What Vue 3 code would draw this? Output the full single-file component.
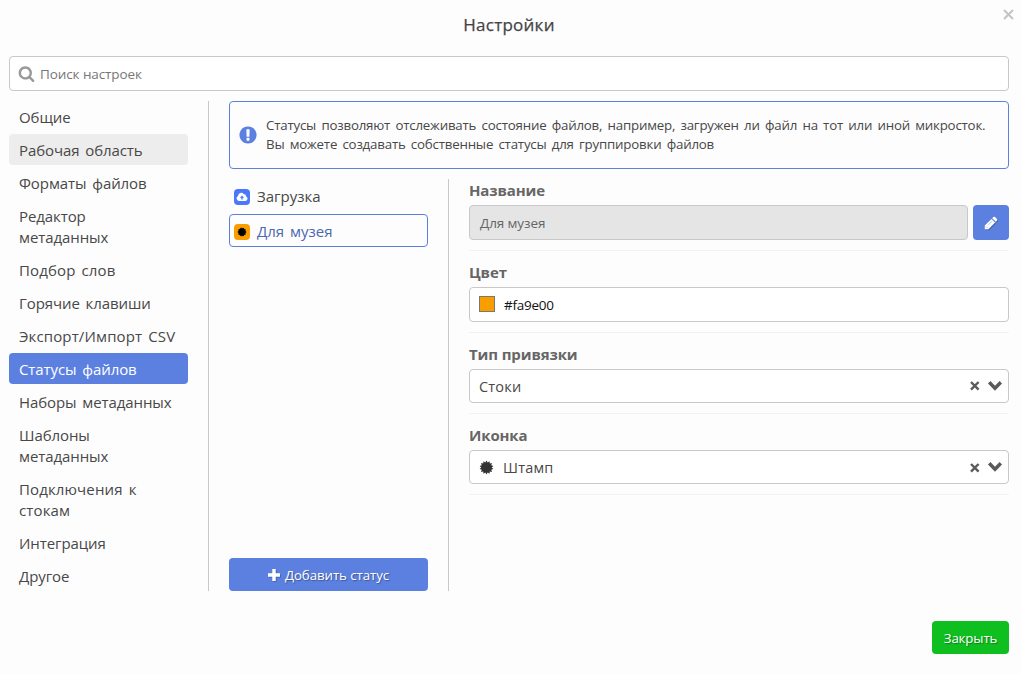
<script setup>
import { ref } from 'vue'

const sections = [
  'Общие', 'Рабочая область', 'Форматы файлов', 'Редактор метаданных', 'Подбор слов',
  'Горячие клавиши', 'Экспорт/Импорт CSV', 'Статусы файлов', 'Наборы метаданных',
  'Шаблоны метаданных', 'Подключения к стокам', 'Интеграция', 'Другое',
]
const roomy = new Set([4, 6, 10])
const hovered = 1
const active = ref(7)

// Outline of the stamp: a disc with evenly spaced teeth
const teeth = 14
const burst = Array.from({ length: teeth * 2 }, (_, i) => {
  const r = i % 2 ? 5.6 : 7.5
  const a = (Math.PI * i) / teeth
  return `${(8 + r * Math.sin(a)).toFixed(2)},${(8 - r * Math.cos(a)).toFixed(2)}`
}).join(' ')
</script>

<template>
  <div class="dialog">
    <button class="close" aria-label="Закрыть окно">
      <svg width="11" height="11" viewBox="0 0 11 11"><path d="M1 1l9 9M10 1l-9 9" /></svg>
    </button>
    <h1>Настройки</h1>
    <div class="search">
      <svg width="17" height="17" viewBox="0 0 1792 1792"><path d="M1216 832q0-185-131.5-316.5t-316.5-131.5-316.5 131.5-131.5 316.5 131.5 316.5 316.5 131.5 316.5-131.5 131.5-316.5zm512 832q0 52-38 90t-90 38q-54 0-90-38l-343-342q-179 124-399 124-143 0-273.5-55.5t-225-150-150-225-55.5-273.5 55.5-273.5 150-225 225-150 273.5-55.5 273.5 55.5 225 150 150 225 55.5 273.5q0 220-124 399l343 343q37 37 37 90z" /></svg>
      <span>Поиск настроек</span>
    </div>
    <div class="main">
      <nav>
        <a v-for="(s, i) in sections" :key="s" :class="{ hovered: i === hovered, active: i === active, roomy: roomy.has(i) }" @click="active = i"><span>{{ s }}</span></a>
      </nav>
      <section class="content">
        <div class="info">
          <svg width="20" height="20" viewBox="0 0 1792 1792"><path d="M896 128q209 0 385.5 103t279.5 279.5 103 385.5-103 385.5-279.5 279.5-385.5 103-385.5-103-279.5-279.5-103-385.5 103-385.5 279.5-279.5 385.5-103zm128 1247v-190q0-14-9-23.5t-22-9.5h-192q-13 0-23 10t-10 23v190q0 13 10 23t23 10h192q13 0 22-9.5t9-23.5zm-2-344l18-621q0-12-10-18-10-8-24-8h-220q-14 0-24 8-10 6-10 18l17 621q0 10 10 17.5t24 7.5h185q14 0 23.5-7.5t10.5-17.5z" /></svg>
          <p>Статусы позволяют отслеживать состояние файлов, например, загружен ли файл на тот или иной микросток.<br>Вы можете создавать собственные статусы для группировки файлов</p>
        </div>
        <div class="columns">
          <div class="statuses">
            <div class="status">
              <i class="tile blue"><svg width="12" height="12" viewBox="0 0 12 12"><path fill="#fff" d="M3 10a2.7 2.7 0 0 1-1-5.1A3.2 3.2 0 0 1 7.8 3.2 1.7 1.7 0 0 1 9.900 5.200 2.500 2.500 0 0 1 9.500 10z" /><path fill="#4b78fb" d="M6 4.600l2.100 2.200H6.700v1.800H5.300V6.800H3.900z" /></svg></i>
              <span>Загрузка</span>
            </div>
            <div class="status selected">
              <i class="tile orange"><svg width="10" height="10" viewBox="0 0 16 16"><polygon :points="burst" /></svg></i>
              <span>Для музея</span>
            </div>
            <button class="btn add">
              <svg width="12" height="12" viewBox="0 0 12 12"><path d="M4.300 0h3.400v4.300H12v3.400H7.700V12H4.300V7.700H0V4.300h4.300z" /></svg>
              <span>Добавить статус</span>
            </button>
          </div>
          <div class="form">
            <div class="field">
              <label>Название</label>
              <div class="row">
                <div class="input disabled"><span>Для музея</span></div>
                <button class="btn edit"><svg width="14" height="14" viewBox="0 0 14 14"><path d="M.8 13.200V9.600L7.500 2.900l3.600 3.600-6.700 6.700zM8.200 2.200l1.200-1.200q.8-.6 1.600 0l2 2q.6.800 0 1.600l-1.200 1.200z" /><path class="nib" d="M1.900 10.400l1.700 1.700M4 9.300l4-4" /></svg></button>
              </div>
            </div>
            <div class="field">
              <label>Цвет</label>
              <div class="input color"><i class="swatch"></i><span>#fa9e00</span></div>
            </div>
            <div class="field">
              <label>Тип привязки</label>
              <div class="input select">
                <span>Стоки</span>
                <svg class="ctl" width="34" height="12" viewBox="0 0 34 12"><path d="M2 2l7.600 7.600M9.600 2l-7.600 7.600" stroke-width="2.400" /><path d="M20.200 2.200l5.800 6 5.800-6" stroke-width="3.400" /></svg>
              </div>
            </div>
            <div class="field">
              <label>Иконка</label>
              <div class="input select">
                <svg class="stamp" width="15" height="15" viewBox="0 0 16 16"><polygon :points="burst" /></svg>
                <span>Штамп</span>
                <svg class="ctl" width="34" height="12" viewBox="0 0 34 12"><path d="M2 3l7.600 7.600M9.600 3l-7.600 7.600" stroke-width="2.400" /><path d="M20.200 2.200l5.800 6 5.800-6" stroke-width="3.400" /></svg>
              </div>
            </div>
          </div>
        </div>
      </section>
    </div>
    <footer><button class="btn done"><span>Закрыть</span></button></footer>
  </div>
</template>

<style>
body { background: #fdfdfd; }
</style>

<style scoped>
* { box-sizing: border-box; }
.dialog {
  position: relative; height: 674px; overflow: hidden; padding: 0 12px 0 9px;
  background: #fdfdfd; color: #484848; font-family: "Open Sans", "Noto Sans", sans-serif; font-size: 15px;
}
svg { display: block; flex: none; }
button { border: 0; padding: 0; background: none; font: inherit; }
.close { position: absolute; right: 7px; top: 9px; }
.close path { stroke: #c4c4c4; stroke-width: 2; }
h1 { margin: 0; height: 56px; line-height: 50px; text-align: center; font-size: 17px; font-weight: 500; letter-spacing: .25px; color: #444; -webkit-text-stroke: .25px #444; }
.search {
  display: flex; align-items: center; height: 35px; padding-left: 8px; gap: 5px;
  border: 1px solid #c8c8c8; border-radius: 4px; background: #fff; color: #777; font-size: 13.500px; letter-spacing: -.1px;
}
.search svg { fill: #999; }
.main { display: flex; height: 490px; margin-top: 10px; }
nav { width: 200px; padding: 0 20px 0 0; border-right: 1px solid #c8c8c8; display: flex; flex-direction: column; gap: 2px; }
nav a { padding: 6px 10px 4px; line-height: 21px; border-radius: 4px; word-spacing: 2px; letter-spacing: -.09px; }
nav a.roomy { letter-spacing: .13px; }
nav a.hovered { background: #ededed; }
nav a.active { background: #5c80e0; color: #fff; }
.content { flex: 1; min-width: 0; padding-left: 20px; display: flex; flex-direction: column; }
.info { display: flex; align-items: center; height: 68px; padding-left: 8px; gap: 8px; border: 1px solid #5c80e0; border-radius: 4px; }
.info svg { fill: #5c80e0; }
.info p { margin: 0; font-size: 13.300px; line-height: 19px; white-space: nowrap; word-spacing: 2px; letter-spacing: -.2px; }
.columns { flex: 1; margin-top: 10px; display: flex; }
.statuses { width: 220px; padding: 0 20px 0 0; border-right: 1px solid #c8c8c8; display: flex; flex-direction: column; gap: 2px; }
.status { height: 33px; display: flex; align-items: center; gap: 7px; padding: 1px 0 0 4px; border: 1px solid transparent; border-radius: 4px; word-spacing: 2px; }
.status.selected { border-color: #5c80e0; color: #4b68b0; }
.tile { width: 16px; height: 16px; margin-top: 1px; border-radius: 4px; display: flex; align-items: center; justify-content: center; }
.blue { background: #4b78fb; }
.orange { background: #fa9e00; }
.btn { display: flex; align-items: center; justify-content: center; height: 33px; border-radius: 4px; background: #5c80e0; color: #fff; font-size: 13.300px; text-shadow: 1px 1px 1px rgba(0, 0, 0, .35); }
.btn svg { fill: #fff; filter: drop-shadow(1px 1px 0 rgba(0, 0, 0, .2)); }
.nib { stroke: #9db3ec; stroke-width: .8; }
.add { margin-top: auto; gap: 5px; letter-spacing: -.08px; }
.form { flex: 1; padding-left: 20px; }
.field { border-bottom: 1px solid #f2f2f2; padding-bottom: 10px; margin-bottom: 10px; }
label { display: block; height: 15px; margin-bottom: 11px; line-height: 23px; font-weight: 700; color: #666; letter-spacing: -.12px; }
.row { display: flex; gap: 5px; }
.row .input { flex: 1; }
.input { display: flex; align-items: center; height: 35px; padding: 0 5px 0 9px; border: 1px solid #c8c8c8; border-radius: 4px; background: #fff; font-size: 13.500px; }
.input.disabled { background: #e5e5e5; color: #666; padding-left: 10px; letter-spacing: -.1px; }
.edit { width: 36px; height: 35px; }
.swatch { width: 16px; height: 16px; margin: 0 9px 2px 0; background: #fa9e00; border: 1px solid #777; }
.color { color: #111; letter-spacing: -.25px; }
.select { height: 34px; font-size: 14.500px; letter-spacing: .2px; }
.ctl { margin-left: auto; fill: none; stroke: #5a5a5a; }
.stamp { fill: #333; margin-right: 9px; }
footer { display: flex; justify-content: flex-end; margin-top: 30px; }
.done { width: 77px; background: #0fbf1f; letter-spacing: -.15px; }
</style>
